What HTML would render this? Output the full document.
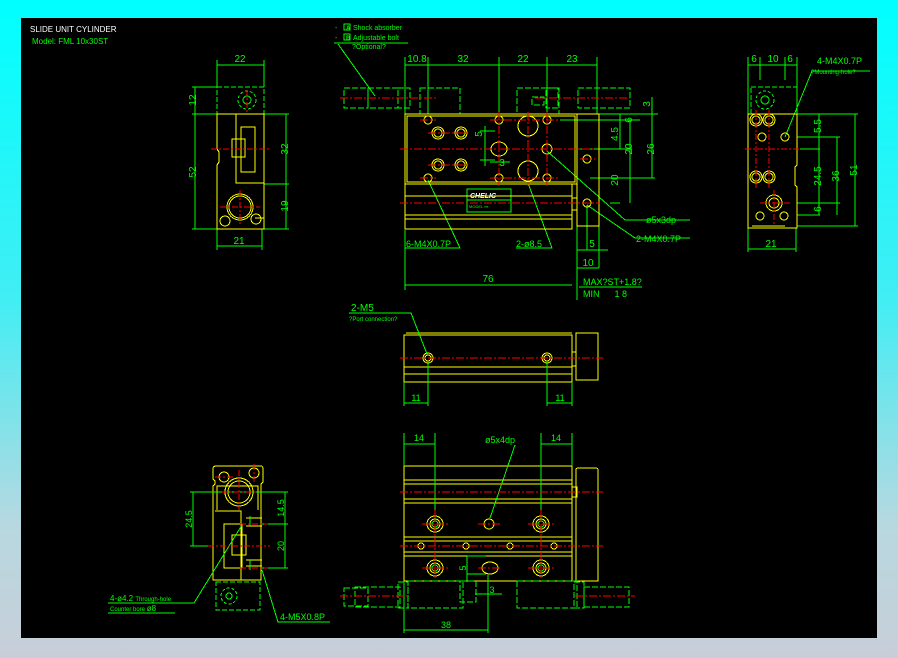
<!DOCTYPE html>
<html><head><meta charset="utf-8"><style>
html,body{margin:0;padding:0;width:898px;height:658px;overflow:hidden;background:linear-gradient(#00ffff 0%,#40eef4 45%,#b8d8e0 80%,#c8ced8 100%);}
svg{position:absolute;left:0;top:0;}
text{font-family:"Liberation Sans",sans-serif;}
</style></head><body>
<svg width="898" height="658" viewBox="0 0 898 658" shape-rendering="crispEdges">
<rect x="21" y="18" width="856" height="620" fill="#000"/>
<g font-size="8">
<text x="30" y="32" fill="#fff">SLIDE UNIT CYLINDER</text>
<text x="32" y="44" fill="#0f0">Model: FML 10x30ST</text>
</g>

<!-- ===== left top side view ===== -->
<g fill="none" stroke-width="1">
<g stroke="#0f0">
<rect x="217" y="87" width="47" height="27" stroke-dasharray="5 2"/>
<line x1="217" y1="60" x2="217" y2="87"/><line x1="264" y1="60" x2="264" y2="87"/>
<line x1="217" y1="65" x2="264" y2="65"/>
<line x1="217" y1="229" x2="217" y2="250"/><line x1="262" y1="229" x2="262" y2="250"/>
<line x1="217" y1="246" x2="262" y2="246"/>
<line x1="192" y1="87" x2="217" y2="87"/><line x1="192" y1="114" x2="217" y2="114"/><line x1="192" y1="229" x2="217" y2="229"/>
<line x1="195" y1="87" x2="195" y2="229"/>
<line x1="264" y1="114" x2="289" y2="114"/><line x1="264" y1="184" x2="289" y2="184"/><line x1="262" y1="229" x2="289" y2="229"/>
<line x1="286" y1="114" x2="286" y2="229"/>
<circle cx="247" cy="100" r="9" stroke-dasharray="3 2"/><circle cx="247" cy="100" r="4"/>
</g>
<g stroke="#ff0">
<path d="M217 114H264V229H217V165l2-3v-10l-2-3z"/>
<path d="M236 114V183H264"/>
<rect x="241" y="127" width="14" height="45"/>
<rect x="232" y="139" width="13" height="18"/>
<path d="M264 186V218H255"/>
<circle cx="240" cy="207" r="13"/><circle cx="240" cy="207" r="11"/>
<circle cx="225" cy="221" r="5"/><circle cx="256" cy="219" r="5"/>
</g>
<g stroke="#f00" stroke-dasharray="6 2 2 2">
<line x1="211" y1="149" x2="270" y2="149"/><line x1="220" y1="207" x2="260" y2="207"/>
<line x1="240" y1="190" x2="240" y2="226"/><line x1="247" y1="90" x2="247" y2="114"/>
</g>
</g>
<g fill="#0f0" font-size="10" text-anchor="middle">
<text x="240" y="62">22</text><text x="239" y="244">21</text>
<text x="192" y="104" transform="rotate(-90 192 100)">12</text>
<text x="192" y="176" transform="rotate(-90 192 172)">52</text>
<text x="284" y="153" transform="rotate(-90 284 149)">32</text>
<text x="284" y="210" transform="rotate(-90 284 206)">19</text>
</g>

<!-- ===== legend ===== -->
<g font-size="7" fill="#0f0">
<text x="335" y="30">-</text><text x="353" y="30">Shock absorber</text>
<text x="335" y="40">-</text><text x="353" y="40">Adjustable bolt</text>
<text x="346" y="30" font-size="6" font-weight="bold">A</text>
<text x="346" y="40" font-size="6" font-weight="bold">B</text>
<text x="352" y="49">?Optional?</text>
</g>
<g fill="none" stroke="#0f0">
<rect x="344" y="24" width="6" height="6"/><rect x="344" y="34" width="6" height="6"/>
<line x1="334" y1="43" x2="408" y2="43"/><line x1="338" y1="44" x2="375" y2="96"/>
</g>

<!-- ===== front view ===== -->
<g fill="none" stroke-width="1">
<g stroke="#0f0">
<line x1="405" y1="57" x2="405" y2="114"/><line x1="428" y1="57" x2="428" y2="114"/>
<line x1="499" y1="57" x2="499" y2="114"/><line x1="547" y1="57" x2="547" y2="114"/><line x1="597" y1="57" x2="597" y2="114"/>
<line x1="405" y1="65" x2="597" y2="65"/>
<g stroke-dasharray="6 2">
<rect x="344" y="88" width="24" height="20"/><rect x="368" y="88" width="30" height="20"/>
<rect x="398" y="88" width="12" height="20"/><rect x="420" y="88" width="40" height="26"/>
<rect x="517" y="88" width="42" height="26"/><rect x="532" y="97" width="12" height="8"/>
<rect x="546" y="88" width="12" height="20"/><rect x="578" y="88" width="52" height="20"/>
</g>
<line x1="570" y1="114" x2="655" y2="114"/><line x1="560" y1="120" x2="640" y2="120"/>
<line x1="580" y1="149" x2="632" y2="149"/><line x1="590" y1="178" x2="655" y2="178"/>
<line x1="610" y1="203" x2="620" y2="203"/>
<line x1="652" y1="97" x2="652" y2="178"/><line x1="638" y1="114" x2="658" y2="114"/>
<line x1="630" y1="120" x2="630" y2="203"/><line x1="620" y1="114" x2="620" y2="149"/>
<line x1="485" y1="126" x2="485" y2="166"/><line x1="480" y1="131" x2="495" y2="131"/><line x1="480" y1="160" x2="495" y2="160"/>
<line x1="490" y1="162" x2="510" y2="162"/>
<line x1="577" y1="226" x2="577" y2="300"/><line x1="599" y1="226" x2="599" y2="268"/><line x1="587" y1="205" x2="587" y2="250"/>
<line x1="577" y1="250" x2="608" y2="250"/><line x1="577" y1="268" x2="599" y2="268"/>
<line x1="405" y1="230" x2="405" y2="290"/><line x1="405" y1="285" x2="572" y2="285"/>
<line x1="579" y1="287" x2="642" y2="287"/>
<rect x="467" y="189" width="44" height="23"/><line x1="467" y1="200" x2="511" y2="200"/>
<path d="M428 180L460 248H405M547 151L625 220H690M587 205L635 238H690M528 183L552 248H516"/>
</g>
<g stroke="#ff0">
<path d="M405 114H577V184H405Z"/><path d="M407 116H575V182H407Z" stroke-width="0.6"/>
<path d="M405 184H572V229H405Z"/><line x1="405" y1="196" x2="572" y2="196"/>
<line x1="405" y1="215" x2="572" y2="215"/><line x1="405" y1="219" x2="572" y2="219"/>
<rect x="577" y="114" width="22" height="112"/><rect x="572" y="198" width="5" height="12"/>
<g>
<circle cx="428" cy="120" r="4"/><circle cx="428" cy="178" r="4"/>
<circle cx="438" cy="133" r="6"/><circle cx="438" cy="133" r="4"/>
<circle cx="461" cy="133" r="6"/><circle cx="461" cy="133" r="4"/>
<circle cx="438" cy="165" r="6"/><circle cx="438" cy="165" r="4"/>
<circle cx="461" cy="165" r="6"/><circle cx="461" cy="165" r="4"/>
<circle cx="499" cy="120" r="4"/><circle cx="499" cy="178" r="4"/>
<ellipse cx="499" cy="149" rx="8" ry="7"/>
<circle cx="528" cy="126" r="10"/><circle cx="528" cy="171" r="10"/>
<circle cx="547" cy="120" r="4"/><circle cx="547" cy="149" r="5"/><circle cx="547" cy="178" r="4"/>
<circle cx="587" cy="159" r="4"/><circle cx="587" cy="203" r="4"/>
</g>
</g>
<g stroke="#f00" stroke-dasharray="8 2 2 2">
<line x1="400" y1="149" x2="595" y2="149"/><line x1="400" y1="203" x2="600" y2="203"/>
<line x1="340" y1="98" x2="438" y2="98"/><line x1="535" y1="98" x2="630" y2="98"/>
<line x1="547" y1="112" x2="547" y2="186"/><line x1="499" y1="112" x2="499" y2="186"/><line x1="528" y1="112" x2="528" y2="186"/>
<line x1="420" y1="120" x2="436" y2="120"/><line x1="420" y1="178" x2="436" y2="178"/>
<line x1="428" y1="133" x2="470" y2="133"/><line x1="428" y1="165" x2="470" y2="165"/>
<line x1="490" y1="120" x2="560" y2="120"/><line x1="490" y1="178" x2="560" y2="178"/>
<line x1="580" y1="159" x2="595" y2="159"/>
</g>
</g>
<g fill="#0f0" font-size="10" text-anchor="middle">
<text x="417" y="62">10.8</text><text x="463" y="62">32</text><text x="523" y="62">22</text><text x="572" y="62">23</text>
<text x="488" y="282">76</text><text x="592" y="247">5</text><text x="588" y="266">10</text>
<text x="646" y="108" transform="rotate(-90 646 104)">3</text>
<text x="628" y="124" transform="rotate(-90 628 120)">6</text>
<text x="614" y="138" transform="rotate(-90 614 134)">4.5</text>
<text x="628" y="153" transform="rotate(-90 628 149)">20</text>
<text x="650" y="153" transform="rotate(-90 650 149)">26</text>
<text x="614" y="184" transform="rotate(-90 614 180)">20</text>
<text x="478" y="138" transform="rotate(-90 478 134)">5</text>
<text x="502" y="166">3</text>
</g>
<g fill="#0f0" font-size="9">
<text x="406" y="247">6-M4X0.7P</text><text x="516" y="247">2-ø8.5</text>
<text x="646" y="223">ø5x3dp</text><text x="636" y="242">2-M4X0.7P</text>
<text x="583" y="285">MAX?ST+1.8?</text><text x="583" y="297">MIN&#160;&#160;&#160;&#160;&#160;&#160;1 8</text>
</g>
<text x="470" y="198" fill="#fff" font-size="7" font-style="italic" font-weight="bold">CHELIC</text>
<text x="469" y="208" fill="#0f0" font-size="4">MODEL ▪▪▪</text>

<!-- ===== right side view ===== -->
<g fill="none">
<g stroke="#0f0">
<line x1="748" y1="57" x2="748" y2="114"/><line x1="797" y1="57" x2="797" y2="114"/>
<line x1="760" y1="57" x2="760" y2="80"/><line x1="785" y1="57" x2="785" y2="80"/>
<line x1="748" y1="65" x2="797" y2="65"/>
<rect x="751" y="87" width="46" height="27" stroke-dasharray="5 2"/>
<circle cx="765" cy="100" r="9" stroke-dasharray="3 2"/><circle cx="765" cy="100" r="4"/>
<line x1="748" y1="228" x2="748" y2="252"/><line x1="796" y1="228" x2="796" y2="252"/>
<line x1="748" y1="249" x2="796" y2="249"/>
<line x1="797" y1="114" x2="858" y2="114"/><line x1="797" y1="137" x2="840" y2="137"/>
<line x1="800" y1="149" x2="820" y2="149"/><line x1="797" y1="203" x2="840" y2="203"/><line x1="797" y1="215" x2="820" y2="215"/>
<line x1="797" y1="226" x2="858" y2="226"/>
<line x1="819" y1="114" x2="819" y2="215"/><line x1="837" y1="137" x2="837" y2="215"/><line x1="855" y1="114" x2="855" y2="226"/>
<path d="M785 137L812 71H870"/>
</g>
<g stroke="#ff0">
<path d="M748 114H797V165l-2 2V185l2 2V228H748Z"/>
<line x1="752" y1="226" x2="785" y2="226"/>
<circle cx="756" cy="120" r="6"/><circle cx="756" cy="120" r="4"/>
<circle cx="769" cy="120" r="6"/><circle cx="769" cy="120" r="4"/>
<circle cx="762" cy="137" r="4"/><circle cx="785" cy="137" r="4"/>
<circle cx="756" cy="177" r="6"/><circle cx="756" cy="177" r="4"/>
<circle cx="769" cy="177" r="6"/><circle cx="769" cy="177" r="4"/>
<circle cx="774" cy="203" r="8"/><circle cx="774" cy="203" r="5"/>
<circle cx="760" cy="216" r="4"/><circle cx="784" cy="216" r="4"/>
</g>
<g stroke="#f00" stroke-dasharray="6 2 2 2">
<line x1="745" y1="149" x2="800" y2="149"/><line x1="756" y1="110" x2="756" y2="190"/><line x1="769" y1="110" x2="769" y2="190"/>
<line x1="760" y1="203" x2="790" y2="203"/><line x1="774" y1="190" x2="774" y2="225"/>
</g>
</g>
<g fill="#0f0" font-size="10" text-anchor="middle">
<text x="754" y="62">6</text><text x="773" y="62">10</text><text x="790" y="62">6</text><text x="771" y="247">21</text>
<text x="817" y="130" transform="rotate(-90 817 126)">5.5</text>
<text x="817" y="180" transform="rotate(-90 817 176)">24.5</text>
<text x="817" y="213" transform="rotate(-90 817 209)">6</text>
<text x="835" y="180" transform="rotate(-90 835 176)">36</text>
<text x="853" y="174" transform="rotate(-90 853 170)">51</text>
</g>
<text x="817" y="64" fill="#0f0" font-size="9">4-M4X0.7P</text>
<text x="811" y="74" fill="#0f0" font-size="6">?Mounting-hole?</text>

<!-- ===== middle view ===== -->
<g fill="none">
<g stroke="#ff0">
<rect x="404" y="335" width="168" height="47"/><line x1="406" y1="333" x2="572" y2="333"/>
<line x1="404" y1="367" x2="572" y2="367"/><line x1="404" y1="374" x2="572" y2="374"/>
<rect x="576" y="333" width="22" height="47"/><rect x="572" y="352" width="4" height="14"/>
<circle cx="428" cy="358" r="5"/><circle cx="428" cy="358" r="3"/>
<circle cx="547" cy="358" r="5"/><circle cx="547" cy="358" r="3"/>
</g>
<line x1="400" y1="358" x2="603" y2="358" stroke="#f00" stroke-dasharray="8 2 2 2"/>
<g stroke="#0f0">
<line x1="404" y1="382" x2="404" y2="406"/><line x1="428" y1="362" x2="428" y2="406"/>
<line x1="547" y1="362" x2="547" y2="406"/><line x1="572" y1="382" x2="572" y2="406"/>
<line x1="404" y1="403" x2="428" y2="403"/><line x1="547" y1="403" x2="572" y2="403"/>
<path d="M349 313H411L427 354"/>
</g>
</g>
<g fill="#0f0">
<text x="351" y="311" font-size="10">2-M5</text>
<text x="349" y="321" font-size="6">?Port connection?</text>
<text x="416" y="401" font-size="9" text-anchor="middle">11</text><text x="560" y="401" font-size="9" text-anchor="middle">11</text>
</g>

<!-- ===== bottom view ===== -->
<g fill="none">
<g stroke="#ff0">
<rect x="404" y="466" width="168" height="115"/>
<line x1="404" y1="480" x2="572" y2="480"/><line x1="404" y1="484" x2="572" y2="484"/>
<line x1="404" y1="499" x2="572" y2="499"/><line x1="404" y1="503" x2="572" y2="503"/>
<line x1="404" y1="537" x2="572" y2="537"/><line x1="404" y1="541" x2="572" y2="541"/>
<line x1="404" y1="552" x2="572" y2="552"/><line x1="404" y1="556" x2="572" y2="556"/>
<path d="M576 470q0-2 2-2h18q2 0 2 2V581H576Z"/><rect x="572" y="487" width="5" height="10"/>
<circle cx="435" cy="524" r="8"/><circle cx="435" cy="524" r="5"/>
<circle cx="541" cy="524" r="8"/><circle cx="541" cy="524" r="5"/>
<circle cx="435" cy="568" r="8"/><circle cx="435" cy="568" r="5"/>
<circle cx="541" cy="568" r="8"/><circle cx="541" cy="568" r="5"/>
<circle cx="489" cy="524" r="5"/>
<circle cx="421" cy="546" r="3"/><circle cx="466" cy="546" r="3"/><circle cx="510" cy="546" r="3"/><circle cx="554" cy="546" r="3"/>
<ellipse cx="490" cy="568" rx="8" ry="6"/>
</g>
<g stroke="#0f0">
<circle cx="435" cy="524" r="3"/><circle cx="541" cy="524" r="3"/><circle cx="435" cy="568" r="3"/><circle cx="541" cy="568" r="3"/>
<line x1="404" y1="433" x2="404" y2="466"/><line x1="435" y1="433" x2="435" y2="516"/>
<line x1="541" y1="433" x2="541" y2="516"/><line x1="572" y1="433" x2="572" y2="466"/>
<line x1="404" y1="444" x2="435" y2="444"/><line x1="541" y1="444" x2="572" y2="444"/>
<path d="M515 445L490 518"/>
<g stroke-dasharray="6 2">
<rect x="344" y="588" width="24" height="18"/><rect x="355" y="587" width="45" height="20"/>
<rect x="398" y="582" width="10" height="26"/><rect x="408" y="581" width="55" height="27"/>
<rect x="460" y="581" width="16" height="21"/>
<rect x="517" y="581" width="60" height="27"/><rect x="574" y="582" width="10" height="26"/>
<rect x="584" y="587" width="45" height="20"/>
</g>
<line x1="404" y1="581" x2="404" y2="633"/><line x1="488" y1="575" x2="488" y2="633"/>
<line x1="404" y1="630" x2="488" y2="630"/>
<line x1="467" y1="556" x2="467" y2="581"/><line x1="467" y1="556" x2="486" y2="556"/>
<line x1="467" y1="574" x2="486" y2="574"/>
<line x1="475" y1="594" x2="502" y2="594"/>
</g>
<g stroke="#f00" stroke-dasharray="8 2 2 2">
<line x1="400" y1="492" x2="603" y2="492"/><line x1="400" y1="546" x2="603" y2="546"/>
<line x1="340" y1="596" x2="410" y2="596"/><line x1="575" y1="596" x2="635" y2="596"/>
<line x1="422" y1="524" x2="450" y2="524"/><line x1="528" y1="524" x2="555" y2="524"/>
<line x1="422" y1="568" x2="450" y2="568"/><line x1="528" y1="568" x2="555" y2="568"/>
<line x1="478" y1="524" x2="500" y2="524"/><line x1="478" y1="568" x2="502" y2="568"/>
<line x1="435" y1="510" x2="435" y2="580"/><line x1="541" y1="510" x2="541" y2="580"/>
</g>
</g>
<g fill="#0f0" font-size="9" text-anchor="middle">
<text x="419" y="441">14</text><text x="556" y="441">14</text><text x="500" y="443">ø5x4dp</text>
<text x="446" y="628">38</text>
<text x="462" y="572" transform="rotate(-90 462 568)">5</text><text x="492" y="593">3</text>
</g>

<!-- ===== bottom-left view ===== -->
<g fill="none">
<g stroke="#ff0">
<path d="M213 469q0-3 3-3h45q2 0 2 3V482l-2 2V580H213V486l2-2v-3l-2-2z"/>
<path d="M217 510V486H258V510"/>
<path d="M215 511H241V580"/>
<rect x="224" y="524" width="18" height="44"/>
<rect x="232" y="535" width="14" height="20"/>
<circle cx="239" cy="492" r="14"/><circle cx="239" cy="492" r="11"/>
<circle cx="224" cy="477" r="5"/><circle cx="254" cy="473" r="5"/>
<path d="M246 518h16M246 526h16M246 560h16M246 566h16"/>
</g>
<g stroke="#0f0">
<rect x="216" y="582" width="44" height="28" stroke-dasharray="5 2"/>
<circle cx="229" cy="596" r="8" stroke-dasharray="3 2"/><circle cx="229" cy="596" r="3"/>
<line x1="190" y1="492" x2="262" y2="492"/><line x1="190" y1="546" x2="212" y2="546"/>
<line x1="193" y1="492" x2="193" y2="546"/>
<line x1="262" y1="492" x2="288" y2="492"/><line x1="262" y1="524" x2="288" y2="524"/><line x1="262" y1="568" x2="288" y2="568"/>
<line x1="285" y1="492" x2="285" y2="568"/>
<path d="M108 603H194L242 525"/><line x1="108" y1="613" x2="175" y2="613"/>
<path d="M262 570L278 622H330"/>
<path d="M250 516v10M250 560v10"/>
</g>
<g stroke="#f00" stroke-dasharray="6 2 2 2">
<line x1="222" y1="492" x2="258" y2="492"/><line x1="239" y1="470" x2="239" y2="510"/>
<line x1="208" y1="546" x2="270" y2="546"/><line x1="240" y1="524" x2="268" y2="524"/><line x1="240" y1="568" x2="268" y2="568"/>
<line x1="215" y1="477" x2="233" y2="477"/><line x1="254" y1="464" x2="254" y2="482"/>
</g>
</g>
<g fill="#0f0">
<text x="188" y="523" font-size="9" text-anchor="middle" transform="rotate(-90 188 519)">24.5</text>
<text x="280" y="512" font-size="9" text-anchor="middle" transform="rotate(-90 280 508)">14.5</text>
<text x="280" y="550" font-size="9" text-anchor="middle" transform="rotate(-90 280 546)">20</text>
<text x="110" y="601" font-size="8">4-ø4.2 <tspan font-size="6">Through-hole</tspan></text>
<text x="110" y="611" font-size="6">Counter bore  <tspan font-size="8">ø8</tspan></text>
<text x="280" y="620" font-size="9">4-M5X0.8P</text>
</g>
</svg>
</body></html>
